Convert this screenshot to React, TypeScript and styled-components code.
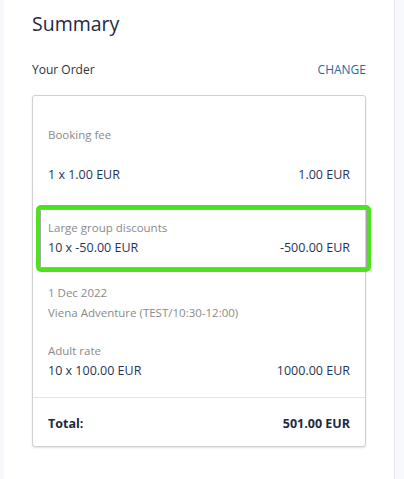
import React from 'react';
import styled, { createGlobalStyle } from 'styled-components';

const GlobalStyle = createGlobalStyle`
  html, body {
    margin: 0;
    padding: 0;
    background: #f7f9fc;
  }
  body {
    font-family: "Open Sans", "Noto Sans", "Liberation Sans", sans-serif;
    -webkit-font-smoothing: antialiased;
  }
`;

const Page = styled.div`
  display: flex;
  padding-left: 4px;
  min-height: 479px;
  box-sizing: border-box;
`;

const Panel = styled.aside`
  box-sizing: border-box;
  width: 391px;
  background: #ffffff;
  border-right: 1px solid #e4e6ea;
  padding: 10px 28px 30px 28px;
`;

const Title = styled.h2`
  margin: 0;
  font-size: 19.5px;
  line-height: 28px;
  font-weight: 400;
  color: #1d2b42;
`;

const OrderHeader = styled.div`
  display: flex;
  justify-content: space-between;
  align-items: baseline;
  margin-top: 23px;
  font-size: 12px;
  line-height: 18px;
`;

const OrderLabel = styled.span`
  color: #2a3344;
`;

const ChangeLink = styled.a`
  color: #2769a3;
  text-decoration: none;
  cursor: pointer;
`;

const Card = styled.div`
  margin-top: 16px;
  border: 1px solid #d0d0d0;
  border-radius: 3px;
  box-shadow: 0 1px 2px rgba(0, 0, 0, 0.12);
  background: #ffffff;
`;

const Item = styled.div<{ $top: number; $bottom: number; $highlight?: boolean }>`
  position: relative;
  padding: ${(p) => p.$top}px 15px ${(p) => p.$bottom}px 15px;
  font-size: 12px;
  line-height: 20px;

  ${(p) =>
    p.$highlight &&
    `
    &::after {
      content: '';
      position: absolute;
      top: 0;
      bottom: -1px;
      left: 3px;
      right: -6px;
      border: 4px solid #4be31e;
      border-radius: 5px;
      box-shadow: inset 0 0 0 1px rgba(60, 60, 60, 0.45);
      pointer-events: none;
    }
  `}
`;

const Label = styled.div`
  color: #8a8a8a;
  font-size: 11.5px;
`;

const Gap = styled.div<{ $h: number }>`
  height: ${(p) => p.$h}px;
`;

const Row = styled.div<{ $bold?: boolean }>`
  display: flex;
  justify-content: space-between;
  color: ${(p) => (p.$bold ? '#1b2a44' : '#1f3556')};
  font-weight: ${(p) => (p.$bold ? 700 : 400)};
  font-size: 12.5px;
`;

const Divider = styled.hr`
  margin: 0;
  border: none;
  border-top: 1px solid #e3e3e3;
`;

export default function App() {
  return (
    <>
      <GlobalStyle />
      <Page>
        <Panel>
          <Title>Summary</Title>
          <OrderHeader>
            <OrderLabel>Your Order</OrderLabel>
            <ChangeLink>CHANGE</ChangeLink>
          </OrderHeader>
          <Card>
            <Item $top={29} $bottom={20}>
              <Label>Booking fee</Label>
              <Gap $h={20} />
              <Row>
                <span>1 x 1.00 EUR</span>
                <span>1.00 EUR</span>
              </Row>
            </Item>
            <Item $top={13} $bottom={13} $highlight>
              <Label>Large group discounts</Label>
              <Row>
                <span>10 x -50.00 EUR</span>
                <span>-500.00 EUR</span>
              </Row>
            </Item>
            <Item $top={12} $bottom={16}>
              <Label>1 Dec 2022</Label>
              <Label>Viena Adventure (TEST/10:30-12:00)</Label>
              <Gap $h={18} />
              <Label>Adult rate</Label>
              <Row>
                <span>10 x 100.00 EUR</span>
                <span>1000.00 EUR</span>
              </Row>
            </Item>
            <Divider />
            <Item $top={16} $bottom={12}>
              <Row $bold>
                <span>Total:</span>
                <span>501.00 EUR</span>
              </Row>
            </Item>
          </Card>
        </Panel>
      </Page>
    </>
  );
}
